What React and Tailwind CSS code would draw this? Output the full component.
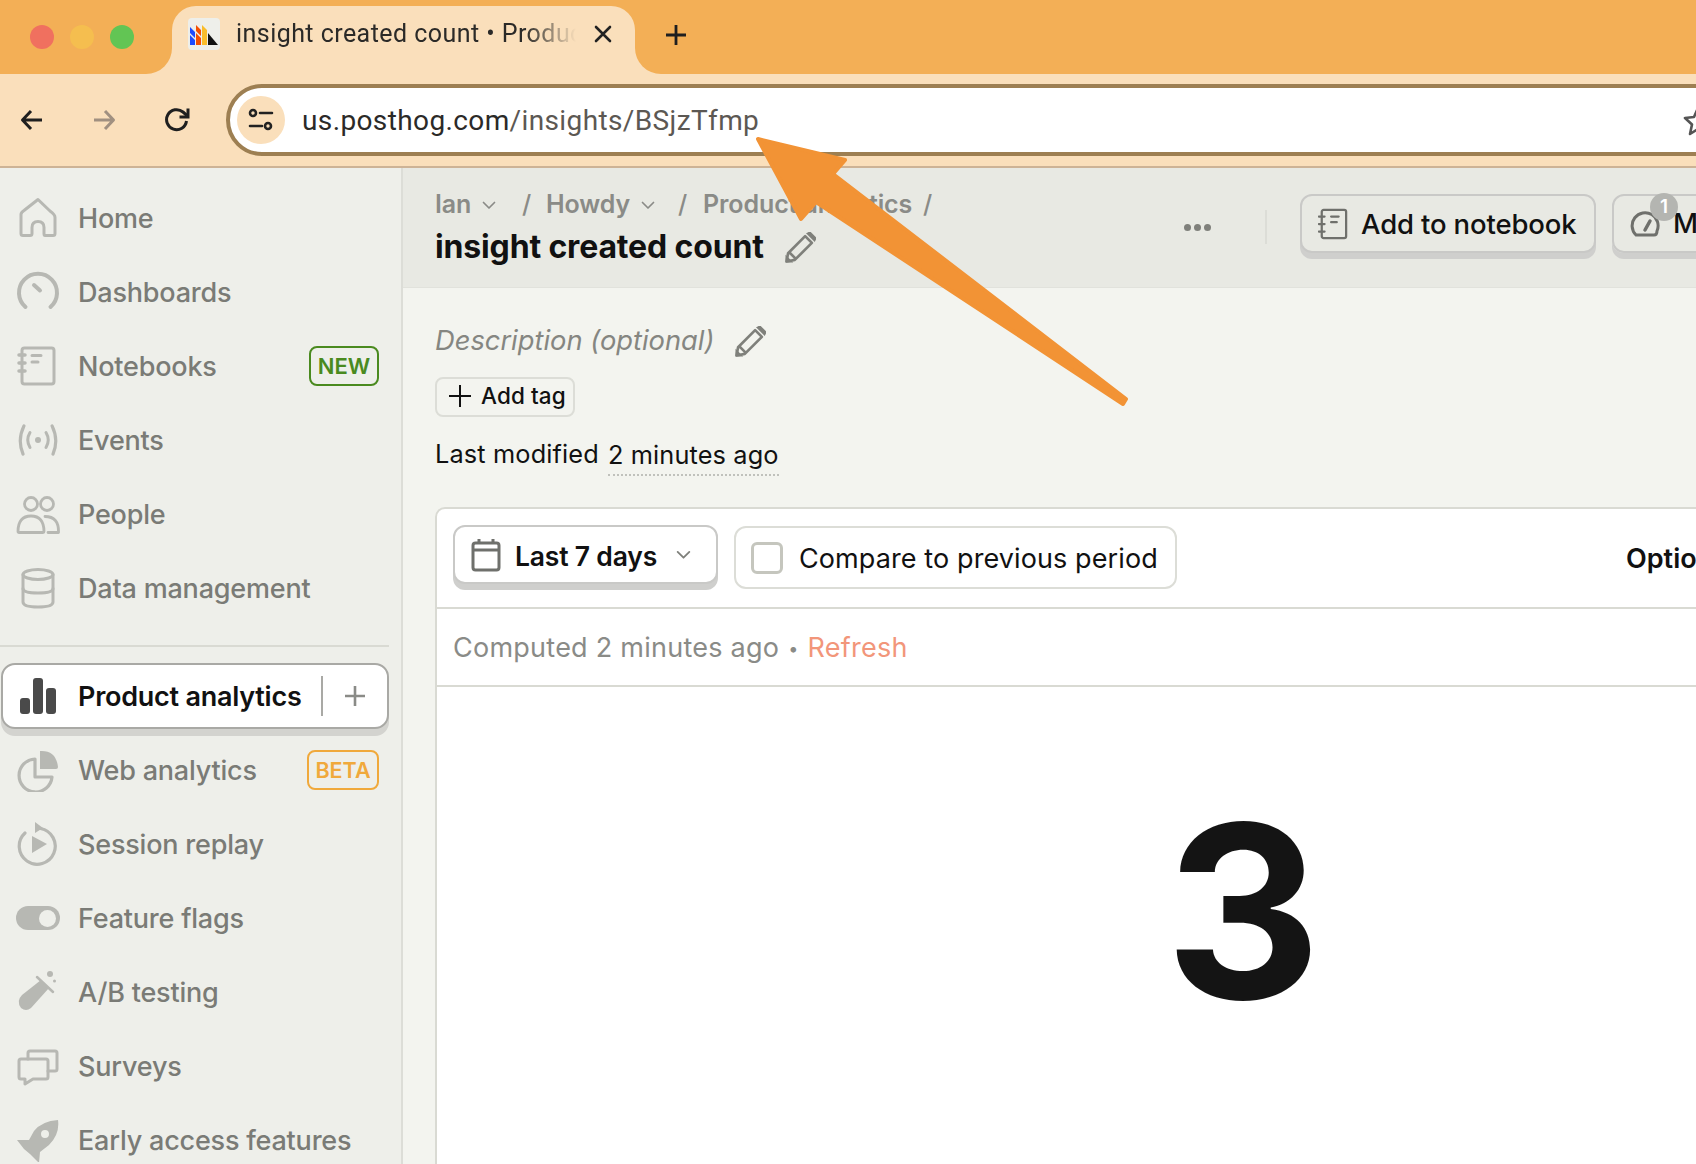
import React from "react";

const sw = { fill: "none", stroke: "currentColor", strokeWidth: 3, strokeLinecap: "round", strokeLinejoin: "round" };

const Ico = ({ children }) => (
  <svg viewBox="0 0 44 44" className="w-[44px] h-[44px] shrink-0 text-[#b7b8b3]">{children}</svg>
);

const icons = {
  home: <path {...sw} d="M22 7 L34 18.5 Q39 22 39 25 V41 Q39 43 37 43 H29 Q28 43 28 41 V35 Q28 29 22 29 Q16 29 16 35 V41 Q16 43 14 43 H7 Q5 43 5 41 V22 Q5 20 8 18 Z" transform="translate(0 -3.5)" />,
  dash: <g {...sw} strokeWidth="4"><path d="M9.5 37 A19 19 0 1 1 34.5 37" /><path d="M18 15 L24 20.5" /></g>,
  note: <g {...sw}><rect x="6" y="4" width="32" height="36" rx="2.5" /><path d="M16 11.5H25M16 18H22" /><path d="M3 11h6M3 19h6M3 27h6" strokeWidth="3.5" /></g>,
  events: <g {...sw}><circle cx="22" cy="22" r="3" fill="currentColor" stroke="none" /><path d="M14 14.5 Q9.5 22 14 29.5M30 14.5 Q34.5 22 30 29.5" /><path d="M6.5 8 Q-1 22 5.5 36M37.5 8 Q45 22 38.5 36" strokeWidth="3.5" transform="translate(2 0) scale(.91 1)" /></g>,
  people: <g {...sw} strokeWidth="2.8"><circle cx="15" cy="12" r="6.5" /><circle cx="31" cy="12" r="6.5" /><path d="M2 39.5 Q2 24 15 24 Q28 24 28 39.5 Q28 40.5 27 40.5 H3 Q2 40.5 2 39.5 Z" /><path d="M29 24.5 Q43 24.5 42.5 40.5 H32" /></g>,
  data: <g {...sw}><ellipse cx="22" cy="8.5" rx="15" ry="5" /><path d="M7 8.5 V36 Q7 41 22 41 Q37 41 37 36 V8.5" /><path d="M7 22.5 Q7 27 22 27 Q37 27 37 22.5" /></g>,
  web: <g><path {...sw} strokeWidth="3.2" d="M19 8 A16.5 16.5 0 1 0 36 26 H19 Z" transform="translate(0 3)" /><path fill="currentColor" d="M24 3 Q40 2 42 19 Q42 21 40 21 H24 Z" /></g>,
  replay: <g><path {...sw} strokeWidth="3.2" d="M24.5 6.5 A18 18 0 1 1 9 11" /><path fill="currentColor" d="M19 0 V11 L27 6 Z M16 14 L31 22 L16 31 Z" /></g>,
  flask: <g fill="currentColor"><path d="M6 25 L25 10 L33 18 L15 38 Q10 42 5 38 Q0 31 6 25 Z" /><path d="M21 7 L37 22" stroke="currentColor" strokeWidth="2.5" strokeLinecap="round" /><circle cx="34" cy="4" r="3" /><circle cx="38.5" cy="11" r="1.5" /></g>,
  surveys: <g {...sw}><path d="M3 17 Q3 15 5 15 H30 Q32 15 32 17 V33 Q32 35 30 35 H17 L9 40 V35 H5 Q3 35 3 33 Z" /><path d="M12 15 V9 Q12 7 14 7 H39 Q41 7 41 9 V25 Q41 27 39 27 H32" /></g>,
  rocket: <g fill="currentColor"><path fillRule="evenodd" d="M42 2 Q44 16 33 27 L24 34 L23 45 L14 36 L8 31 L1 22 L13 22 L18 13 Q26 3 42 2 Z M29 12 A4 4 0 1 0 29 20 A4 4 0 1 0 29 12 Z" /></g>,
};

const Item = ({ icon, label, badge }) => (
  <div className="h-[74px] flex items-center pl-4 pr-[22px] gap-[18px]">
    {icon === "flag" ? (
      <div className="w-[44px] h-[24px] rounded-full bg-[#b7b8b3] flex items-center justify-end pr-1 shrink-0">
        <div className="w-[17px] h-[17px] rounded-full bg-[#eeefea]" />
      </div>
    ) : (
      <Ico>{icons[icon]}</Ico>
    )}
    <span className="pt-[2px] text-[27px] font-medium text-[#7a7b76] tracking-[-0.2px] whitespace-nowrap">{label}</span>
    {badge === "NEW" && (
      <span className="ml-auto w-[70px] h-[40px] flex items-center justify-center rounded-[8px] border-2 border-[#4a8a1f] text-[#4a8a1f] text-[22px] font-semibold">NEW</span>
    )}
    {badge === "BETA" && (
      <span className="ml-auto w-[72px] h-[40px] flex items-center justify-center rounded-[8px] border-2 border-[#f0a93c] text-[#f0a93c] text-[21.5px] font-semibold">BETA</span>
    )}
  </div>
);

const Chev = ({ className }) => (
  <svg viewBox="0 0 16 16" className={className}><path d="M2.5 5.5 L8 11 L13.5 5.5" fill="none" stroke="currentColor" strokeWidth="1.7" strokeLinecap="round" strokeLinejoin="round" /></svg>
);

const Pencil = () => (
  <svg viewBox="0 0 30 30" className="w-[31px] h-[31px] text-[#7f807b] shrink-0">
    <path d="M1.5 28.5 L3 20.5 L19.5 4 L26 10.5 L9.5 27 Z M4 19.5 L10.5 26" fill="none" stroke="currentColor" strokeWidth="2.6" strokeLinejoin="round" />
    <path d="M22 1.5 L24 0.5 L29.5 6 L28.5 8 Z" fill="currentColor" stroke="currentColor" strokeWidth="2" />
    <path d="M0.5 29.5 V22 L8 29.5 Z" fill="currentColor" />
  </svg>
);

const Crumb = ({ label, chev, w }) => (
  <div className={`flex items-center ${w}`}>
    <span className="text-[25px] font-semibold text-[#8a8b87] tracking-[-0.1px]">{label}</span>
    {chev && <Chev className="w-[16px] h-[16px] text-[#8a8b87] ml-[10px]" />}
  </div>
);

export default function App() {
  return (
    <div className="w-[1696px] h-[1164px] overflow-hidden relative bg-[#f3f4ef] text-[#111] font-['Inter',sans-serif]">
      {/* tab strip */}
      <div className="h-[74px] bg-[#f3af56] flex items-end">
        <div className="w-[146px] self-stretch flex items-center pl-[30px] gap-4">
          <div className="w-6 h-6 rounded-full bg-[#f0705f]" />
          <div className="w-6 h-6 rounded-full bg-[#f5be4f]" />
          <div className="w-6 h-6 rounded-full bg-[#62c554]" />
        </div>
        <div className="w-[26px] h-[26px] bg-[#fadfbb]"><div className="w-full h-full bg-[#f3af56] rounded-br-[26px]" /></div>
        <div className="w-[463px] h-[68px] bg-[#fadfbb] rounded-t-[24px] flex items-center pl-4 pb-[12px]">
          <div className="w-8 h-8 rounded bg-[#eeefea] flex items-center justify-center shrink-0">
            <svg viewBox="0 0 30 24" className="w-[30px] h-[24px]">
              <path d="M1 5 L6 10 V16 L1 11Z M1 13 L6 18 V23 H1Z" fill="#1d4aff" />
              <path d="M7 3 L12 8 V14 L7 9Z M7 11 L12 16 V23 H7 Z" fill="#f54e00" />
              <path d="M13 3 L18 8 V23 H13Z" fill="#f9bd2b" />
              <path d="M19 11 L29 23 H19Z" fill="#111" />
            </svg>
          </div>
          <span className="ml-4 w-[340px] overflow-hidden whitespace-nowrap text-[25px] font-['Roboto',sans-serif] text-[#2b2a28] tracking-[0.45px] [mask-image:linear-gradient(90deg,#000_85%,transparent)]">insight created count • Product analytics</span>
          <svg viewBox="0 0 18 18" className="w-[18px] h-[18px] ml-[18px] text-[#222]"><path d="M2 2 L16 16 M16 2 L2 16" stroke="currentColor" strokeWidth="2.6" strokeLinecap="round" /></svg>
        </div>
        <div className="w-[26px] h-[26px] bg-[#fadfbb]"><div className="w-full h-full bg-[#f3af56] rounded-bl-[26px]" /></div>
        <div className="self-stretch flex items-center ml-[5px] pb-1">
          <svg viewBox="0 0 20 20" className="w-5 h-5 text-[#1f1f1f]"><path d="M10 0 V20 M0 10 H20" stroke="currentColor" strokeWidth="2.8" /></svg>
        </div>
      </div>

      {/* toolbar */}
      <div className="h-[94px] bg-[#fadfbb] border-b-2 border-[#cdb396] flex items-center w-[1696px]">
        <div className="w-[226px] flex items-center pl-5 gap-[48px] shrink-0">
          <svg viewBox="0 0 24 24" className="w-6 h-6 text-[#1f1f1f]"><path d="M22 12 H3 M11 3 L2.5 12 L11 21" fill="none" stroke="currentColor" strokeWidth="3" strokeLinejoin="round" /></svg>
          <svg viewBox="0 0 24 24" className="w-6 h-6 text-[#a09080]"><path d="M2 12 H21 M13 3 L21.5 12 L13 21" fill="none" stroke="currentColor" strokeWidth="3" strokeLinejoin="round" /></svg>
          <svg viewBox="0 0 26 26" className="w-[26px] h-[26px] text-[#1f1f1f]"><path d="M22.5 14 A10 10 0 1 1 19 5 L23 8.5" fill="none" stroke="currentColor" strokeWidth="3" /><path d="M24 1.5 V10 H15.5" fill="none" stroke="currentColor" strokeWidth="3" /></svg>
        </div>
        <div className="w-[1600px] shrink-0 h-[72px] bg-white border-4 border-[#9d7f52] rounded-full flex items-center pl-[7px]">
          <div className="w-[48px] h-[48px] rounded-full bg-[#fadfbb] flex items-center justify-center shrink-0">
            <svg viewBox="0 0 26 24" className="w-[26px] h-[24px] text-[#222]"><g fill="none" stroke="currentColor" strokeWidth="2.6" strokeLinecap="round"><circle cx="5" cy="5" r="3" /><path d="M12 5 H24 M2 18 H14" /><circle cx="20" cy="18" r="3" /></g></svg>
          </div>
          <span className="ml-[17px] pt-[2px] text-[28px] font-['Roboto',sans-serif] text-[#2b2a28] tracking-[0.38px]">us.posthog.com<span className="text-[#5c5853]">/insights/BSjzTfmp</span></span>
          <svg viewBox="0 0 30 30" className="absolute left-[1683px] top-[106px] w-[30px] h-[30px] text-[#555]"><path d="M15 2 L19 11 L28 12 L21 18.5 L23 28 L15 23 L7 28 L9 18.5 L2 12 L11 11 Z" fill="none" stroke="currentColor" strokeWidth="2.6" strokeLinejoin="round" /></svg>
        </div>
      </div>

      <div className="flex h-[996px]">
        {/* sidebar */}
        <div className="w-[403px] shrink-0 bg-[#eeefea] border-r-2 border-[#dcddd7] pt-[13px] overflow-hidden">
          <Item icon="home" label="Home" />
          <Item icon="dash" label="Dashboards" />
          <Item icon="note" label="Notebooks" badge="NEW" />
          <Item icon="events" label="Events" />
          <Item icon="people" label="People" />
          <Item icon="data" label="Data management" />
          <div className="h-[2px] w-[389px] bg-[#d9dad3] mt-5 mb-4" />
          <div className="w-[388px] ml-px h-[66px] rounded-[14px] bg-white border-2 border-[#a9a9a5] shadow-[0_7px_0_#d3d3cf] flex items-center pl-[13px]">
            <svg viewBox="0 0 44 44" className="w-[44px] h-[44px] text-[#4a4a4a] shrink-0"><rect x="4" y="24" width="10" height="16" rx="3" fill="currentColor" /><rect x="17" y="4" width="10" height="36" rx="3" fill="currentColor" /><rect x="30" y="14" width="10" height="26" rx="3" fill="currentColor" /></svg>
            <span className="ml-[18px] pt-[2px] text-[27px] font-semibold text-[#111] tracking-[-0.25px] whitespace-nowrap">Product analytics</span>
            <div className="ml-auto w-[2px] h-[40px] bg-[#a9a9a5]" />
            <svg viewBox="0 0 20 20" className="w-5 h-5 text-[#8a8b87] mx-[22px]"><path d="M10 0 V20 M0 10 H20" stroke="currentColor" strokeWidth="2.6" /></svg>
          </div>
          <div className="h-1" />
          <Item icon="web" label="Web analytics" badge="BETA" />
          <Item icon="replay" label="Session replay" />
          <Item icon="flag" label="Feature flags" />
          <Item icon="flask" label="A/B testing" />
          <Item icon="surveys" label="Surveys" />
          <Item icon="rocket" label="Early access features" />
        </div>

        {/* main */}
        <div className="flex-1 min-w-0 overflow-hidden">
          <div className="h-[120px] bg-[#e8e9e3] border-b border-[#e1e2dc] flex w-[1600px] pl-8">
            <div className="w-[726px] shrink-0">
              <div className="flex items-center h-[36px] mt-[19px]">
                <Crumb label="Ian" chev w="w-[87px]" />
                <span className="text-[25px] text-[#8a8b87] w-[24px] font-medium">/</span>
                <Crumb label="Howdy" chev w="w-[132px]" />
                <span className="text-[25px] text-[#8a8b87] w-[25px] font-medium">/</span>
                <span className="text-[25px] font-semibold text-[#8a8b87] w-[220px] tracking-[-0.1px] whitespace-nowrap">Product analytics</span>
                <span className="text-[25px] text-[#8a8b87] font-medium">/</span>
              </div>
              <div className="flex items-center gap-[21px] mt-[4px]">
                <span className="text-[32px] font-bold leading-[40px] tracking-[-0.15px] whitespace-nowrap">insight created count</span>
                <Pencil />
              </div>
            </div>
            <div className="w-[73px] shrink-0 flex items-center justify-center gap-[3px] h-[118px]">
              <span className="w-[7px] h-[7px] rounded-full bg-[#7f807b]" />
              <span className="w-[7px] h-[7px] rounded-full bg-[#7f807b]" />
              <span className="w-[7px] h-[7px] rounded-full bg-[#7f807b]" />
            </div>
            <div className="w-[2px] h-[34px] bg-[#dcddd7] mt-[42px] ml-[31px]" />
            <div className="ml-[33px] mt-[26px] w-[296px] h-[59px] rounded-[12px] border-2 border-[#c9c9c7] shadow-[0_6px_0_#cfcfcd] flex items-center pl-[16px] bg-[#e8e9e3] shrink-0">
              <svg viewBox="0 0 32 34" className="w-[30px] h-[32px] text-[#6f706c] shrink-0"><g {...sw} strokeWidth="2.4"><rect x="4" y="2" width="26" height="30" rx="2" /><path d="M14 9H22M14 15H20" /><path d="M1 9h6M1 17h6M1 25h6" /></g></svg>
              <span className="ml-[13px] pt-[2px] text-[27.5px] font-medium tracking-[-0.15px] whitespace-nowrap">Add to notebook</span>
            </div>
            <div className="ml-4 mt-[26px] w-[200px] h-[59px] rounded-[12px] border-2 border-[#c9c9c7] shadow-[0_6px_0_#cfcfcd] flex items-center pl-[16px] relative shrink-0">
              <svg viewBox="0 0 30 28" className="w-[30px] h-[28px] text-[#6f706c] shrink-0"><path d="M6 25 A13 13 0 1 1 27 21 Q27 25 24 25 Z" fill="none" stroke="currentColor" strokeWidth="3" /><path d="M15 20 L20 11" stroke="currentColor" strokeWidth="3.5" strokeLinecap="round" /></svg>
              <span className="ml-[13px] text-[27.5px] font-medium">M</span>
              <span className="absolute left-[36px] top-[-3px] w-[28px] h-[28px] rounded-full bg-[#b4b5b1] text-white text-[19px] font-semibold flex items-center justify-center">1</span>
            </div>
          </div>

          <div className="pl-8 pt-[35px]">
            <div className="flex items-center gap-[21px] h-[36px]">
              <span className="text-[27.3px] italic text-[#858681] whitespace-nowrap">Description (optional)</span>
              <Pencil />
            </div>
            <div className="mt-[18px] w-[140px] h-[40px] rounded-[8px] border-2 border-[#dcddd7] flex items-center pl-3 pb-[2px] gap-[10px] text-[22.5px] font-medium tracking-[0.1px]">
              <svg viewBox="0 0 22 22" className="w-[22px] h-[22px] text-[#111]"><path d="M11 0 V22 M0 11 H22" stroke="currentColor" strokeWidth="2" /></svg>
              <span>Add tag</span>
            </div>
            <div className="mt-[19px] h-[36px] flex items-center text-[25.3px] tracking-[0.15px] whitespace-nowrap">
              Last modified<span className="ml-[9px] border-b-2 border-dotted border-[#c0c1bc] leading-[34px] h-[38px] translate-y-[3px]">2 minutes ago</span>
            </div>

            <div className="mt-[35px] w-[1616px] h-[700px] bg-white rounded-tl-[10px] border-2 border-[#d9dad3]">
              <div className="h-[100px] border-b-2 border-[#d9dad3] flex items-start pl-4 relative">
                <div className="mt-4 w-[265px] h-[59px] rounded-[12px] border-2 border-[#c9c9c7] shadow-[0_6px_0_#cfcfcd] flex items-center pl-4 bg-white">
                  <svg viewBox="0 0 30 34" className="w-[30px] h-[34px] text-[#6f706c]"><g fill="none" stroke="currentColor" strokeWidth="3" strokeLinejoin="round"><rect x="2" y="5" width="26" height="27" rx="2.5" /><path d="M2 12 H28" /><path d="M8 1 V6 M22 1 V6" /></g></svg>
                  <span className="ml-[14px] pt-[4px] text-[26.5px] font-semibold tracking-[-0.2px] whitespace-nowrap">Last 7 days</span>
                  <Chev className="w-[17px] h-[17px] text-[#7f807b] ml-[18px]" />
                </div>
                <div className="ml-[16px] mt-[17px] w-[443px] h-[63px] rounded-[12px] border-2 border-[#dcddd7] flex items-center pl-[15px]">
                  <div className="w-[32px] h-[32px] rounded-[6px] border-[3px] border-[#c5c6be] shrink-0" />
                  <span className="ml-[16px] pt-[3px] text-[27px] tracking-[0.1px] whitespace-nowrap">Compare to previous period</span>
                </div>
                <span className="ml-[449px] mt-[30px] text-[27px] font-semibold whitespace-nowrap">Options</span>
              </div>
              <div className="h-[78px] border-b-2 border-[#d9dad3] flex items-center pl-4 pt-[2px] text-[27px] text-[#8a8b87] tracking-[0.25px] whitespace-nowrap">
                Computed 2 minutes ago<span className="mx-[9px] text-[18px]">•</span><span className="text-[#f2967a]">Refresh</span>
              </div>
              <div className="flex justify-center pt-[124px]">
                <span className="text-[242px] font-bold leading-[200px] text-[#141414]">3</span>
              </div>
            </div>
          </div>
        </div>
      </div>

      {/* arrow annotation */}
      <svg viewBox="0 0 1696 1164" className="absolute inset-0 w-[1696px] h-[1164px] pointer-events-none">
        <path d="M758 139 L845 160 L833 174 L1126 399 L1123 404 L816 202 L801 219 Z" fill="#f29335" stroke="#f29335" strokeWidth="4" strokeLinejoin="round" />
      </svg>
    </div>
  );
}
